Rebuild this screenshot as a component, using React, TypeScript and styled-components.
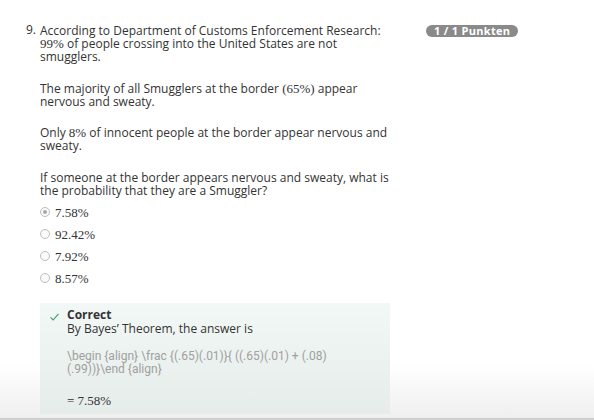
import React from "react";
import styled, { createGlobalStyle } from "styled-components";

const Global = createGlobalStyle`
  html, body { margin: 0; padding: 0; }
  body { font-family: "Open Sans", sans-serif; color: #333; }
`;

const Page = styled.div`
  box-sizing: border-box;
  height: 420px;
  overflow: hidden;
  background: linear-gradient(to bottom, #ffffff 0px, #ffffff 365px, #efefef 418px);
  border-bottom: 2px solid #cfcfcf;
  padding: 24px 0 0 26px;
  display: flex;
  align-items: flex-start;
`;

const Number = styled.div`
  width: 14px;
  font-size: 12px;
  line-height: 13px;
  margin-top: -1px;
`;

const Body = styled.div`
  width: 352px;
  font-size: 12px;
  line-height: 13px;
`;

const Para = styled.p`
  margin: 0 0 18.5px 0;
  &:last-of-type { margin-bottom: 9px; }
`;

const M = styled.span`
  font-family: "Liberation Serif", serif;
  font-size: 13px;
  line-height: 13px;
`;

const Options = styled.div`
  display: flex;
  flex-direction: column;
  gap: 9px;
`;

const Option = styled.label`
  display: flex;
  align-items: center;
  gap: 5px;
  height: 13px;
  font-family: "Liberation Serif", serif;
  font-size: 13px;
  color: #333;
`;

const Radio = styled.span<{ $checked?: boolean }>`
  box-sizing: border-box;
  width: 10px;
  height: 10px;
  border-radius: 50%;
  border: 1px solid #bdbdbd;
  background: #fafafa;
  display: flex;
  align-items: center;
  justify-content: center;
  &::after {
    content: "";
    width: 4px;
    height: 4px;
    border-radius: 50%;
    background: ${(p) => (p.$checked ? "#a8a8a8" : "transparent")};
  }
`;

const Feedback = styled.div`
  margin-top: 18px;
  width: 350px;
  box-sizing: border-box;
  padding: 5px 10px 7px 10px;
  background: linear-gradient(to bottom, #f2f8f6, #e6ecea);
  display: flex;
  gap: 8px;
`;

const Check = styled.svg`
  flex: none;
  margin-top: 5px;
`;

const FbText = styled.div`
  font-size: 12px;
  line-height: 13px;
`;

const Title = styled.div`
  font-weight: 700;
  margin-bottom: 1px;
`;

const Code = styled.div`
  margin-top: 15px;
  font-family: "Liberation Sans Narrow", "Roboto", sans-serif;
  font-size: 12px;
  line-height: 13px;
  letter-spacing: 0px;
  color: #a0a0a0;
`;

const Result = styled.div`
  margin-top: 18px;
  font-family: "Liberation Serif", serif;
  font-size: 13px;
  color: #333;
`;

const Badge = styled.div`
  margin-left: 34px;
  margin-top: 1px;
  background: #8a8a8a;
  color: #fff;
  font-weight: 700;
  font-size: 11px;
  line-height: 12px;
  padding: 0 8px;
  border-radius: 6px;
  letter-spacing: 0.3px;
`;

export default function App() {
  const options = ["7.58%", "92.42%", "7.92%", "8.57%"];
  return (
    <>
      <Global />
      <Page>
        <Number>9.</Number>
        <Body>
          <Para>
            According to Department of Customs Enforcement Research:
            <br />
            <M>99%</M> of people crossing into the United States are not smugglers.
          </Para>
          <Para>
            The majority of all Smugglers at the border <M>(65%)</M> appear nervous and sweaty.
          </Para>
          <Para>
            Only <M>8%</M> of innocent people at the border appear nervous and sweaty.
          </Para>
          <Para>
            If someone at the border appears nervous and sweaty, what is the probability that they are a Smuggler?
          </Para>
          <Options>
            {options.map((o, i) => (
              <Option key={o}>
                <Radio $checked={i === 0} />
                {o}
              </Option>
            ))}
          </Options>
          <Feedback>
            <Check width="9" height="8" viewBox="0 0 9 8">
              <path d="M0.6 4.4 L3.2 7 L8.4 0.8" fill="none" stroke="#3a9a6a" strokeWidth="1.1" />
            </Check>
            <FbText>
              <Title>Correct</Title>
              <div>By Bayes’ Theorem, the answer is</div>
              <Code>
                \begin {"{align}"} \frac {"{(.65)(.01)}{ ((.65)(.01) + (.08)"}
                <br />
                {"(.99))}\\end {align}"}
              </Code>
              <Result>= 7.58%</Result>
            </FbText>
          </Feedback>
        </Body>
        <Badge>1 / 1 Punkten</Badge>
      </Page>
    </>
  );
}
